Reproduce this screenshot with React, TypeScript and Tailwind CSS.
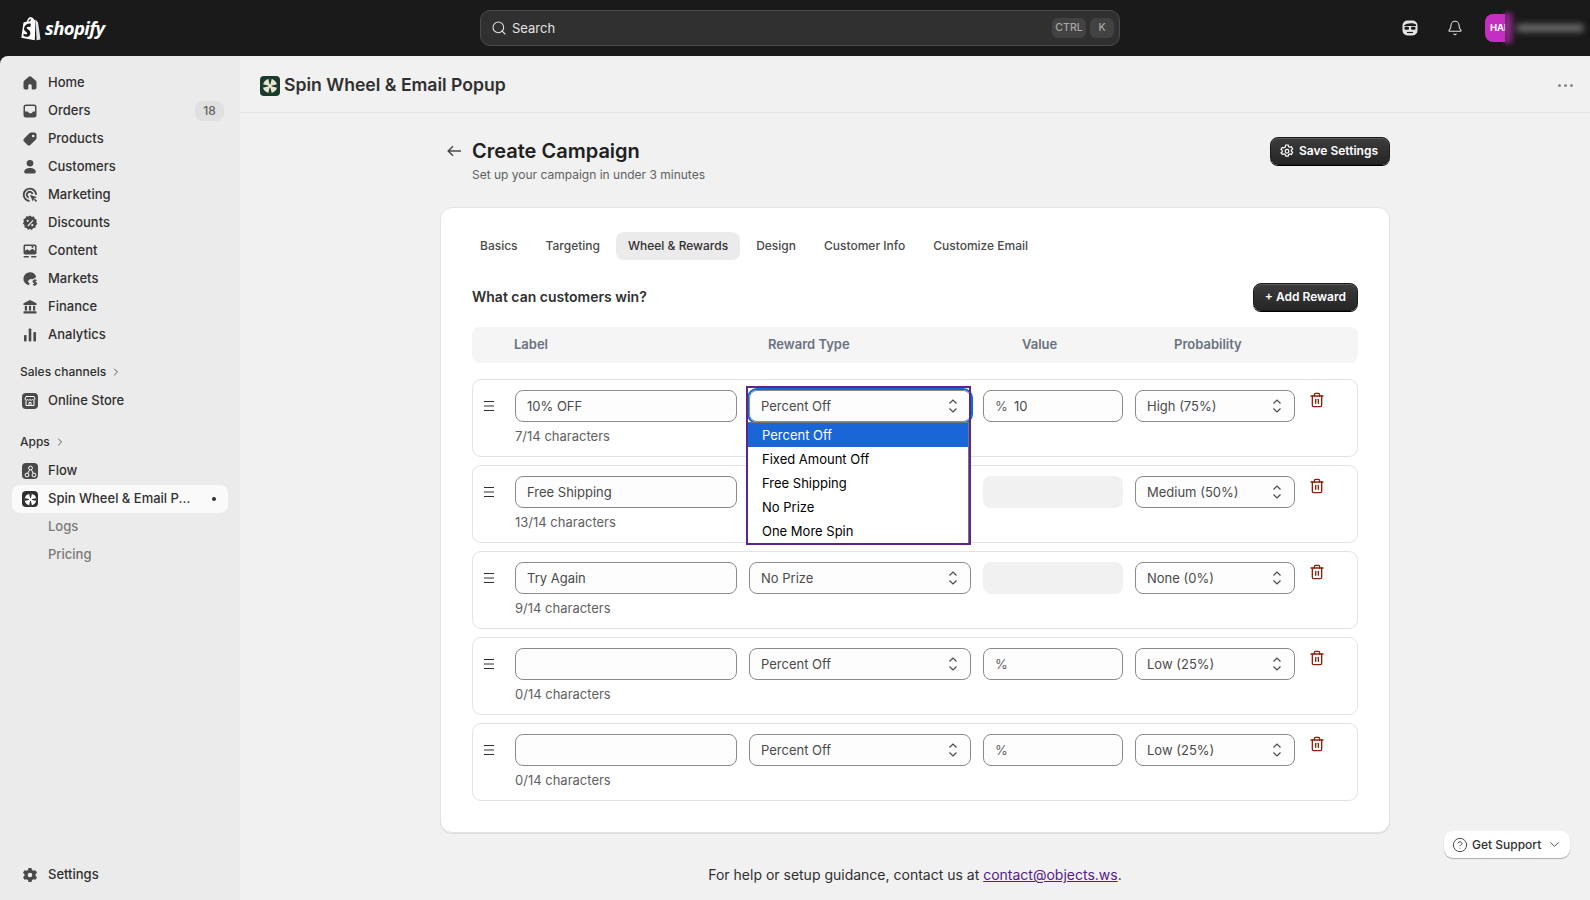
import { Bell, ChevronDown, ChevronRight, CircleHelp, Search, Trash2 } from 'lucide-react';
import type { ReactNode } from 'react';

const ICON_COLOR = '#4a4a4a';

const Glyph = ({ children }: { children: ReactNode }) => (
  <svg width="20" height="20" viewBox="0 0 20 20" fill={ICON_COLOR} className="shrink-0">
    {children}
  </svg>
);

const HomeIcon = () => (
  <Glyph>
    <path d="M10 3.200c-.5 0-.9.200-1.300.500L4.400 7.500c-.6.500-.9 1.200-.9 1.900v5.100c0 1.100.9 2 2 2h1.700c.6 0 1.100-.5 1.100-1.100v-2.700c0-.8.700-1.400 1.700-1.400s1.700.6 1.700 1.400v2.700c0 .6.500 1.100 1.100 1.100h1.700c1.100 0 2-.9 2-2V9.400c0-.7-.3-1.400-.9-1.900l-4.300-3.800c-.4-.3-.8-.5-1.300-.5z" />
  </Glyph>
);
const OrdersIcon = () => (
  <Glyph>
    <path fillRule="evenodd" d="M6 3.500h8A2.500 2.500 0 0 1 16.500 6v8a2.500 2.500 0 0 1-2.500 2.500H6A2.500 2.500 0 0 1 3.500 14V6A2.500 2.500 0 0 1 6 3.500zM5 6v4.500h2.400c.4 0 .7.200.9.500l.4.700c.2.300.5.500.9.500h1.600c.4 0 .7-.2.9-.5l.4-.7c.2-.3.500-.5.900-.5H15V6a1 1 0 0 0-1-1H6a1 1 0 0 0-1 1z" />
  </Glyph>
);
const ProductsIcon = () => (
  <Glyph>
    <path fillRule="evenodd" d="M11 3.500h3.500c1.100 0 2 .9 2 2V9c0 .5-.2 1-.6 1.400l-5.600 5.600c-.8.800-2 .8-2.800 0L4 12.500c-.8-.8-.8-2 0-2.800l5.600-5.600c.4-.4.900-.6 1.400-.6zm2.200 4.800a1.300 1.300 0 1 0 0-2.600 1.300 1.300 0 0 0 0 2.600z" />
  </Glyph>
);
const CustomersIcon = () => (
  <Glyph>
    <circle cx="10" cy="6.300" r="3.300" />
    <path d="M4.200 14.800c0-2.300 2.500-3.900 5.800-3.900s5.800 1.600 5.800 3.900c0 1-.8 1.700-1.700 1.700H5.900c-.9 0-1.700-.7-1.700-1.700z" />
  </Glyph>
);
const MarketingIcon = () => (
  <Glyph>
    <path fill="none" stroke={ICON_COLOR} strokeWidth="1.900" d="M9.500 16a6.200 6.200 0 1 1 6.600-6.200" />
    <path fill="none" stroke={ICON_COLOR} strokeWidth="1.900" d="M8.800 12.500a2.900 2.900 0 1 1 3.700-3.400" />
    <path d="M9.800 9.800l7.200 2.400-2.900 1.300-1.300 2.900z" />
    <path d="M14.400 14.200l2.200 2.200" stroke={ICON_COLOR} strokeWidth="1.600" />
  </Glyph>
);
const DiscountsIcon = () => (
  <Glyph>
    <path
      fillRule="evenodd"
      d="M10 2.500l1.800 1.300 2.200-.2.800 2.100 2 1.100-.5 2.200 1 2-1.600 1.500-.2 2.200-2.200.4-1.400 1.800-1.900-1-2 .8-1.300-1.800-2.200-.5v-2.300L2.900 10.500l1-2-.5-2.100 2-1.100.8-2.100 2.200.2zM7.700 8.900a1.100 1.100 0 1 0 0-2.200 1.100 1.100 0 0 0 0 2.200zm4.600 4.400a1.100 1.100 0 1 0 0-2.200 1.100 1.100 0 0 0 0 2.200zM12.600 6.900l-5.200 5.700 1 .8 5.100-5.600z"
    />
  </Glyph>
);
const ContentIcon = () => (
  <Glyph>
    <path fillRule="evenodd" d="M5.200 3.500h9.600c1 0 1.700.8 1.700 1.700v6.600c0 1-.8 1.700-1.700 1.700H5.200c-1 0-1.700-.8-1.700-1.700V5.200c0-1 .8-1.700 1.700-1.700zM5 9.800l2.300-1.500 2 1.400 3.200-1.900L15 9.800V5.500a.5.500 0 0 0-.5-.5h-9a.5.500 0 0 0-.5.500zm7.500-2.900a1.100 1.100 0 1 0 0-2.200 1.100 1.100 0 0 0 0 2.200z" />
    <rect x="3.500" y="15" width="5.500" height="1.600" rx=".8" />
    <rect x="11" y="15" width="5.500" height="1.600" rx=".8" />
  </Glyph>
);
const MarketsIcon = () => (
  <Glyph>
    <path d="M9.800 3.300a6.500 6.500 0 0 0-1 12.900l.8-1.600-1.900-2.400 2.500-2.300 2.300.3 3.700-2A6.500 6.500 0 0 0 9.800 3.300z" />
    <path fill="none" stroke={ICON_COLOR} strokeWidth="1.300" d="M16.600 11.300h-2.300a1.100 1.100 0 0 0 0 2.200h1a1.100 1.100 0 0 1 0 2.200h-2.400M14.800 10.200v6.600" />
  </Glyph>
);
const FinanceIcon = () => (
  <Glyph>
    <path d="M10 3l6.500 3.200v1.900H3.500V6.200z" />
    <rect x="4.800" y="8.800" width="2.200" height="4.800" />
    <rect x="8.900" y="8.800" width="2.200" height="4.800" />
    <rect x="13" y="8.800" width="2.200" height="4.800" />
    <rect x="3.500" y="14.200" width="13" height="2.400" rx=".6" />
  </Glyph>
);
const AnalyticsIcon = () => (
  <Glyph>
    <rect x="4" y="10" width="2.600" height="6.500" rx=".8" />
    <rect x="8.700" y="3.500" width="2.600" height="13" rx=".8" />
    <rect x="13.400" y="7" width="2.600" height="9.500" rx=".8" />
  </Glyph>
);
const SettingsIcon = () => (
  <Glyph>
    <path
      fillRule="evenodd"
      d="M8.500 3h3l.5 2 1.500.8 2-.6 1.500 2.600-1.500 1.400v1.600l1.500 1.400-1.500 2.600-2-.6-1.500.8-.5 2h-3l-.5-2-1.500-.8-2 .6L3 12.200l1.500-1.400V9.200L3 7.800l1.500-2.600 2 .6L8 5zM10 12.300a2.300 2.300 0 1 0 0-4.600 2.300 2.300 0 0 0 0 4.600z"
    />
  </Glyph>
);

const Tile = ({ children, bg = 'bg-[#4a4a4a]' }: { children: ReactNode; bg?: string }) => (
  <span className={`flex h-4 w-4 shrink-0 items-center justify-center rounded-[4px] ${bg} mx-0.5`}>{children}</span>
);

// spoked wheel: light disc, dark cross spokes, small hub
const WheelMark = ({ size, disc, spoke, hub }: { size: number; disc: string; spoke: string; hub: string }) => (
  <svg width={size} height={size} viewBox="0 0 20 20">
    <circle cx="10" cy="10" r="9" fill={disc} />
    <path d="M10 10L7.800 1h4.400zM10 10l2.200 9H7.800zM10 10l9-2.200v4.400zM10 10l-9 2.200V7.800z" fill={spoke} />
    <circle cx="10" cy="10" r="2.300" fill={hub} />
  </svg>
);

const StoreTile = () => (
  <Tile>
    <svg width="12" height="12" viewBox="0 0 12 12" fill="none" stroke="#fff" strokeWidth="1">
      <path d="M2 1.500h8l1 2.500a1.400 1.400 0 0 1-2.500.6 1.700 1.700 0 0 1-2.500 0 1.700 1.700 0 0 1-2.500 0A1.400 1.400 0 0 1 1 4z" />
      <path d="M2 5.500v5h8v-5M5 10.500V7.500h2v3" />
    </svg>
  </Tile>
);
const FlowTile = () => (
  <Tile>
    <svg width="13" height="13" viewBox="0 0 13 13" fill="none" stroke="#fff" strokeWidth="1">
      <circle cx="6.500" cy="3" r="1.900" />
      <circle cx="3" cy="10" r="1.900" />
      <circle cx="10" cy="10" r="1.900" />
      <path d="M5.600 4.700L3.800 8.300M7.400 4.700l1.800 3.600" />
    </svg>
  </Tile>
);
const SpinTile = () => (
  <Tile bg="bg-[#303030]">
    <WheelMark size={13} disc="#ffffff" spoke="#303030" hub="#ffffff" />
  </Tile>
);

const NavRow = ({ icon, label, badge, active }: { icon: ReactNode; label: string; badge?: string; active?: boolean }) => (
  <div className={`flex h-7 items-center gap-2 rounded-lg pl-2 pr-1 ${active ? 'bg-[#fafafa]' : ''}`}>
    {icon}
    <span className="flex-1 truncate text-[13px] font-medium text-[#303030]">{label}</span>
    {badge && (
      <span className="flex h-5 w-[29px] items-center justify-center rounded-lg bg-[#e0e0e0] text-xs font-medium text-[#616161]">
        {badge}
      </span>
    )}
    {active && <span className="mr-[8px] h-1 w-1 rounded-full bg-[#303030]" />}
  </div>
);

const mainNav = [
  { label: 'Home', icon: <HomeIcon /> },
  { label: 'Orders', icon: <OrdersIcon />, badge: '18' },
  { label: 'Products', icon: <ProductsIcon /> },
  { label: 'Customers', icon: <CustomersIcon /> },
  { label: 'Marketing', icon: <MarketingIcon /> },
  { label: 'Discounts', icon: <DiscountsIcon /> },
  { label: 'Content', icon: <ContentIcon /> },
  { label: 'Markets', icon: <MarketsIcon /> },
  { label: 'Finance', icon: <FinanceIcon /> },
  { label: 'Analytics', icon: <AnalyticsIcon /> },
];

const SectionLabel = ({ label }: { label: string }) => (
  <div className="flex h-7 items-center gap-1 pl-2 text-xs font-medium text-[#303030]">
    {label}
    <ChevronRight size={12} strokeWidth={1.8} className="text-[#4a4a4a]" />
  </div>
);

const Sidebar = () => (
  <aside className="flex w-[240px] shrink-0 flex-col bg-[#ebebeb] px-3 pb-[11px] pt-[13px]">
    {mainNav.map((item) => (
      <NavRow key={item.label} {...item} />
    ))}
    <div className="mb-px mt-[9px]">
      <SectionLabel label="Sales channels" />
    </div>
    <NavRow label="Online Store" icon={<StoreTile />} />
    <div className="mb-px mt-[13px]">
      <SectionLabel label="Apps" />
    </div>
    <NavRow label="Flow" icon={<FlowTile />} />
    <NavRow label="Spin Wheel & Email P..." icon={<SpinTile />} active />
    <div className="flex h-7 items-center pl-9 text-[13px] font-medium text-[#7a7a7a]">Logs</div>
    <div className="flex h-7 items-center pl-9 text-[13px] font-medium text-[#7a7a7a]">Pricing</div>
    <div className="mt-auto">
      <NavRow label="Settings" icon={<SettingsIcon />} />
    </div>
  </aside>
);

const TopBar = () => (
  <header className="relative flex h-14 shrink-0 items-center bg-[#1a1a1a]">
    <div className="flex w-[480px] items-center pl-5">
      <svg width="21" height="25" viewBox="0 0 21 24" className="shrink-0">
        <path
          fill="#ffffff"
          d="M15 3.300l-.9.300C13.700 2.100 12.900 1 11.700 1c-.2-.3-.5-.5-.8-.5C8.500.4 7.300 3.400 6.900 5L4.300 5.800c-.7.200-.8.300-.9 1L1.300 21.200 14.800 23.800 15.600 3.300z"
        />
        <path fill="#e3e3e3" d="M15.700 3.200l.9 20.600 4-.9S18.100 6 18 5.700c-.1-.3-.3-.4-.5-.4z" />
        <path
          fill="#1a1a1a"
          d="M10.900 8.100l-.8 2.500s-.9-.4-1.900-.4c-1.500.1-1.500 1-1.500 1.300.1 1.300 3.500 1.600 3.700 4.700.2 2.400-1.300 4-3.300 4.200-2.500.1-3.800-1.300-3.800-1.300l.5-2.200s1.300 1 2.400.9c.7 0 1-.6.900-1-.1-1.700-2.900-1.600-3.100-4.500C4.300 9.400 6 7.100 9.400 6.900c1-.1 1.500.2 1.500 1.200z"
        />
        <path fill="#1a1a1a" d="M11 2.100c-1.200.4-2.300 1.700-2.900 3l2.300-.7c.1-1 .3-1.700.6-2.300z" />
      </svg>
      <span className="ml-[4px] font-['Open_Sans',sans-serif] text-[18.5px] font-bold italic tracking-[-0.6px] text-white">shopify</span>
    </div>
    <div className="flex h-9 w-[640px] items-center rounded-[10px] border border-[#4a4a4a] bg-[#303030] pl-2.5 pr-[5px]">
      <Search size={16} strokeWidth={1.6} className="text-[#e3e3e3]" />
      <span className="ml-[5px] flex-1 pt-px text-[13px] text-[#e3e3e3]">Search</span>
      <span className="flex h-5 w-[34px] items-center justify-center rounded-md bg-[#424242] text-[10.5px] font-medium text-[#a8a8a8]">CTRL</span>
      <span className="ml-1 flex h-5 w-6 items-center justify-center rounded-md bg-[#424242] text-[10.5px] font-medium text-[#a8a8a8]">K</span>
    </div>
    <div className="ml-[280px] flex h-5 w-5 items-center justify-center">
      <svg width="16" height="16" viewBox="0 0 16 16">
        <rect x="0.500" y="0.500" width="15" height="15" rx="5" fill="#e3e3e3" />
        <path d="M2 5.500c3-2.500 9-3 12-1v1.500H2z" fill="#1a1a1a" />
        <rect x="2.500" y="6.800" width="4.500" height="3" rx="1.200" fill="#1a1a1a" />
        <rect x="9" y="6.800" width="4.500" height="3" rx="1.200" fill="#1a1a1a" />
        <path d="M5 12.500h6" stroke="#1a1a1a" strokeWidth="1.200" />
      </svg>
    </div>
    <Bell size={16} strokeWidth={1.6} className="ml-[27px] text-[#e3e3e3]" />
    <div className="ml-[22px] flex h-7 w-7 items-center rounded-lg bg-[#c42fc0] pl-[5px] text-[9.5px] font-bold tracking-[-0.2px] text-white">HAF</div>
    {/* blurred account name */}
    <div className="absolute left-[1505px] top-[10px] h-9 w-[85px] bg-[#1a1a1a]/70 backdrop-blur-[3px]" />
    <div className="absolute left-[1505px] top-[12px] h-8 w-[10px] bg-linear-to-r from-[#c42fc0]/70 to-transparent blur-[2px]" />
    <div className="absolute left-[1516px] top-[24px] h-2 w-[68px] rounded bg-[#6a6a6a] blur-[3px]" />
  </header>
);

const UpDown = () => (
  <svg width="10" height="16" viewBox="0 0 10 16" fill="none" stroke="#4a4a4a" strokeWidth="1.200" className="shrink-0">
    <path d="M1.500 5.500L5 2l3.500 3.500M1.500 10.500L5 14l3.500-3.500" />
  </svg>
);

const Select = ({ value }: { value: string }) => (
  <div className="flex h-8 w-full items-center justify-between rounded-lg border border-[#8a8a8a] bg-[#fdfdfd] pl-[11px] pr-3 text-[13px] text-[#4a4a4a]">
    <span className="pt-[2px]">{value}</span>
    <UpDown />
  </div>
);

const TextBox = ({ value }: { value: string }) => (
  <div className="flex h-8 w-full items-center rounded-lg border border-[#8a8a8a] bg-[#fdfdfd] px-[11px] pt-[2px] text-[13px] text-[#4a4a4a]">
    {value}
  </div>
);

const options = ['Percent Off', 'Fixed Amount Off', 'Free Shipping', 'No Prize', 'One More Spin'];

const OpenDropdown = () => (
  <>
    <div className="absolute -inset-[2px] rounded-[10px] border-2 border-[#0a6ad6]" />
    <div className="absolute left-[-3px] top-[-4px] z-10 h-[159px] w-[225px] border-2 border-[#5b2690]" />
    <div className="absolute left-[-1px] top-[32px] z-20 w-[221px] border-r border-t border-[#777] bg-white text-[13px] text-black">
      {options.map((option, i) => (
        <div key={option} className={`flex h-6 items-center pl-[14px] pt-px ${i === 0 ? 'bg-[#1a66d6] text-white' : ''}`}>
          {option}
        </div>
      ))}
    </div>
  </>
);

type Reward = {
  label: string;
  count: number;
  type: string | null; // null: the row's select sits behind the open list
  value: string | null;
  probability: string;
  open?: boolean;
};

const rewards: Reward[] = [
  { label: '10% OFF', count: 7, type: 'Percent Off', value: '10', probability: 'High (75%)', open: true },
  { label: 'Free Shipping', count: 13, type: null, value: null, probability: 'Medium (50%)' },
  { label: 'Try Again', count: 9, type: 'No Prize', value: null, probability: 'None (0%)' },
  { label: '', count: 0, type: 'Percent Off', value: '', probability: 'Low (25%)' },
  { label: '', count: 0, type: 'Percent Off', value: '', probability: 'Low (25%)' },
];

const RewardRow = ({ reward }: { reward: Reward }) => (
  <div className="grid h-[78px] grid-cols-[19px_222px_222px_140px_160px_auto] content-start gap-x-3 rounded-[9px] border border-[#e3e3e3] bg-white pl-[11px] pt-2.5">
    <svg width="10" height="10" viewBox="0 0 10 10" stroke="#303030" strokeWidth="1" className="mt-[11px]">
      <path d="M0 .5h10M0 5h10M0 9.500h10" />
    </svg>
    <div>
      <TextBox value={reward.label} />
      <div className="mt-[4px] text-[13px] leading-5 text-[#616161]">{reward.count}/14 characters</div>
    </div>
    <div className="relative h-8">
      {reward.type && <Select value={reward.type} />}
      {reward.open && <OpenDropdown />}
    </div>
    {reward.value === null ? (
      <div className="h-8 rounded-lg bg-[#f1f1f1]" />
    ) : (
      <div className="flex h-8 items-center rounded-lg border border-[#8a8a8a] bg-[#fdfdfd] pl-[11px] pt-[2px] text-[13px] text-[#4a4a4a]">
        <span className="w-[19px] text-[#616161]">%</span>
        {reward.value}
      </div>
    )}
    <Select value={reward.probability} />
    <Trash2 size={16} strokeWidth={2} className="ml-[2px] mt-[2px] text-[#8e1f0b]" />
  </div>
);

const tabs = ['Basics', 'Targeting', 'Wheel & Rewards', 'Design', 'Customer Info', 'Customize Email'];

const DarkButton = ({ children }: { children: ReactNode }) => (
  <button className="flex h-7 items-center rounded-lg border border-[#1a1a1a] bg-linear-to-b from-[#3c3c3c] to-[#262626] text-xs font-semibold text-white shadow-[inset_0_1px_0_#5a5a5a,0_1px_0_#000]">
    {children}
  </button>
);

export default function App() {
  return (
    <div className="relative flex h-screen w-full flex-col overflow-hidden bg-[#1a1a1a] font-['Inter',sans-serif]">
      <TopBar />
      <div className="flex min-h-0 flex-1 overflow-hidden rounded-tl-lg">
        <Sidebar />
        <main className="min-w-0 flex-1 bg-[#f1f1f1]">
          <div className="flex h-[57px] items-center border-b border-[#e6e6e6] pl-5 pr-[14px] pt-[3px]">
            <span className="flex h-5 w-5 items-center justify-center rounded-[4px] bg-[#1b3a2e]">
              <WheelMark size={16} disc="#e8e6d0" spoke="#1b3a2e" hub="#e8e6d0" />
            </span>
            <h1 className="ml-1 flex-1 text-[17.6px] font-semibold text-[#303030]">Spin Wheel & Email Popup</h1>
            <div className="flex gap-[3px] pr-[3px]">
              <span className="h-[3px] w-[3px] rounded-full bg-[#8a8a8a]" />
              <span className="h-[3px] w-[3px] rounded-full bg-[#8a8a8a]" />
              <span className="h-[3px] w-[3px] rounded-full bg-[#8a8a8a]" />
            </div>
          </div>

          <div className="mx-auto w-[950px]">
            <div className="flex items-start justify-between pt-6">
              <div className="flex items-start">
                <svg width="14" height="12" viewBox="0 0 14 12" fill="none" stroke="#4a4a4a" strokeWidth="1.500" className="ml-[7px] mt-2">
                  <path d="M14 6H1.500M6 1.200L1.200 6 6 10.800" />
                </svg>
                <div className="ml-[11px]">
                  <h2 className="text-xl font-semibold leading-7 text-[#202020]">Create Campaign</h2>
                  <p className="mt-px text-xs leading-[18px] text-[#616161]">Set up your campaign in under 3 minutes</p>
                </div>
              </div>
              <DarkButton>
                <span className="flex items-center pl-2 pr-[11px]">
                  <svg width="16" height="16" viewBox="0 0 20 20" fill="none" stroke="#fff" strokeWidth="1.500">
                    <path d="M8.500 2.500h3l.5 2 1.500.8 2-.6 1.500 2.600-1.500 1.400v1.600l1.500 1.400-1.500 2.600-2-.6-1.500.8-.5 2h-3l-.5-2-1.500-.8-2 .6L2.500 12.500 4 11.100V9.500L2.500 8.100 4 5.500l2 .6 1.500-.8z" />
                    <circle cx="10" cy="10.300" r="2.300" />
                  </svg>
                  <span className="ml-[4px]">Save Settings</span>
                </span>
              </DarkButton>
            </div>

            <section className="mt-[23px] rounded-xl border border-[#e3e3e3] bg-white px-[31px] pb-[31px] pt-[24px] shadow-[0_1px_0_rgba(0,0,0,0.08)]">
              <div className="-ml-1 flex gap-1">
                {tabs.map((tab) => (
                  <div
                    key={tab}
                    className={`flex h-7 items-center rounded-lg px-3 text-xs font-medium text-[#4a4a4a] ${tab === 'Wheel & Rewards' ? 'bg-[#ebebeb] text-[#303030]' : ''}`}
                  >
                    {tab}
                  </div>
                ))}
              </div>

              <div className="mt-[23px] flex items-center justify-between">
                <h3 className="text-sm font-semibold text-[#303030]">What can customers win?</h3>
                <DarkButton>
                  <span className="px-[11px]">+ Add Reward</span>
                </DarkButton>
              </div>

              <div className="mt-4 grid h-9 grid-cols-[19px_222px_222px_140px_160px] items-center gap-x-3 rounded-lg bg-[#f5f5f5] pl-[11px] text-[13px] font-semibold text-[#6b7280]">
                <span />
                <span>Label</span>
                <span className="pl-5">Reward Type</span>
                <span className="pl-10">Value</span>
                <span className="pl-10">Probability</span>
              </div>

              <div className="mt-4 flex flex-col gap-2">
                {rewards.map((reward, i) => (
                  <RewardRow key={i} reward={reward} />
                ))}
              </div>
            </section>

            <p className="mt-8 text-center text-sm text-[#303030]">
              For help or setup guidance, contact us at{' '}
              <a className="text-[#551a8b] underline">contact@objects.ws</a>.
            </p>
          </div>
        </main>
      </div>

      <button className="absolute left-[1444px] top-[831px] flex h-[27px] w-[126px] items-center rounded-[9px] bg-white pl-2 text-xs font-medium text-[#303030] shadow-[0_1px_1px_rgba(0,0,0,0.3)]">
        <CircleHelp size={16} strokeWidth={1.5} className="text-[#4a4a4a]" />
        <span className="ml-1 flex-1 text-left">Get Support</span>
        <ChevronDown size={15} strokeWidth={1.5} className="mr-2 text-[#4a4a4a]" />
      </button>
    </div>
  );
}
